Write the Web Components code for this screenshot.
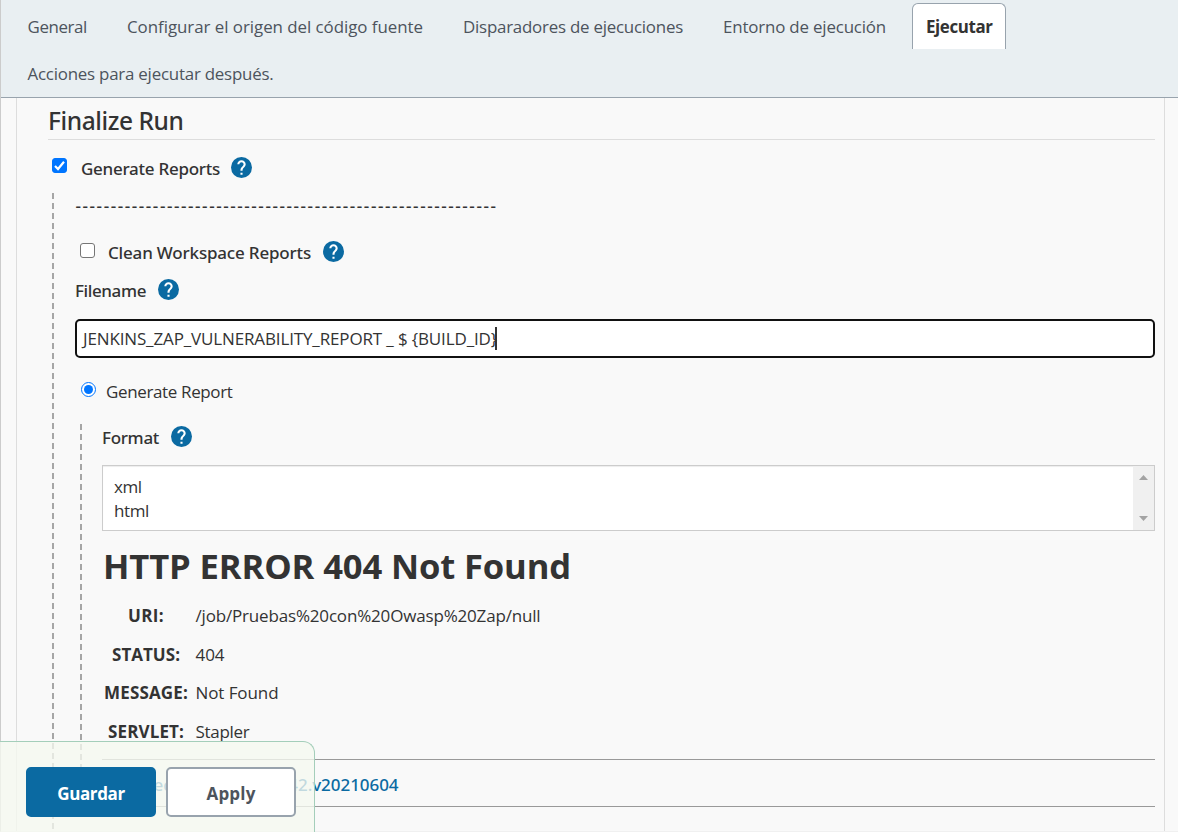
<!DOCTYPE html>
<html lang="es">
<head>
<meta charset="utf-8">
<title>Jenkins</title>
<style>
html,body{margin:0;height:100%;overflow:hidden;background:#f9f9f9}
body{font:17px/24px "Open Sans","Noto Sans",sans-serif;color:#333}
</style>
</head>
<body>
<job-config></job-config>
<script>
const define=(name,html,ready)=>customElements.define(name,class extends HTMLElement{
  connectedCallback(){
    if(this.shadowRoot)return;
    this.attachShadow({mode:'open'}).innerHTML=html;
    if(ready)ready.call(this,this.shadowRoot);
  }
});

/* A single line label tracked to the width given in its w attribute. */
define('ui-text',`<style>:host{display:inline-block;white-space:pre;flex:none}span{display:inline-block}</style><span><slot></slot></span>`,function(root){
  const s=root.querySelector('span'),w=+this.getAttribute('w');
  if(!w)return;
  const n=this.textContent.length;
  const natural=s.getBoundingClientRect().width;
  s.style.letterSpacing=((w-natural)/n).toFixed(4)+'px';
  this.style.width=w+'px';
});

define('help-icon',`<style>:host{display:block;width:21px;height:21px;flex:none}svg{display:block}</style>
<svg width="21" height="21" viewBox="2 2 20 20"><circle cx="12" cy="12" r="10" fill="#0b6aa2"/><path fill="#fff" d="M13 19h-2v-2h2v2zm2.07-7.75-.9.92C13.45 12.9 13 13.5 13 15h-2v-.5c0-1.1.45-2.1 1.17-2.83l1.24-1.26c.37-.36.59-.86.59-1.41 0-1.1-.9-2-2-2s-2 .9-2 2H8c0-2.21 1.79-4 4-4s4 1.79 4 4c0 .88-.36 1.68-.93 2.25z"/></svg>`);

define('check-mark',`<style>:host{display:block;box-sizing:border-box;width:15px;height:15px;border:1px solid #767676;border-radius:3px;background:#fff;flex:none}
:host([checked]){background:#0075ff;border-color:#0075ff}svg{display:none;margin:-1px}:host([checked]) svg{display:block}</style>
<svg width="15" height="15" viewBox="0 0 15 15"><path d="M3 8l3 3 6-7.2" fill="none" stroke="#fff" stroke-width="2.2"/></svg>`);

define('radio-mark',`<style>:host{display:grid;place-items:center;box-sizing:border-box;width:15px;height:15px;border:1.5px solid #0075ff;border-radius:50%;background:#fff;flex:none}i{width:9px;height:9px;border-radius:50%;background:#0075ff}</style><i></i>`);

define('config-tab',`<style>:host{display:block;box-sizing:border-box;height:47px;padding:12px 20px 0;color:#4d545d}
:host([active]){padding:11px 12px 0 13.5px;margin:0 0 0 5.5px;border:1px solid #98a3ad;border-bottom:0;border-radius:6px 6px 0 0;background:#fff;color:#333;font-weight:700;height:46px}</style><slot></slot>`);

define('config-tabs',`<style>:host{box-sizing:border-box;display:flex;flex-wrap:wrap;align-content:flex-start;height:98px;padding:3px 100px 0 6.5px;background:#e9eff2;border-bottom:1px solid #98a3ad;font-size:16.9px}</style>
<config-tab><ui-text w="59.5">General</ui-text></config-tab>
<config-tab><ui-text w="296">Configurar el origen del código fuente</ui-text></config-tab>
<config-tab><ui-text w="220">Disparadores de ejecuciones</ui-text></config-tab>
<config-tab><ui-text w="163">Entorno de ejecución</ui-text></config-tab>
<config-tab active><ui-text w="66.5">Ejecutar</ui-text></config-tab>
<config-tab><ui-text w="246">Acciones para ejecutar después.</ui-text></config-tab>`);

define('dashed-rail',`<style>:host{display:block;box-sizing:border-box;background:repeating-linear-gradient(#a6a6a6 0 6px,transparent 6px 10px) 0 0/2px 100% no-repeat}</style><slot></slot>`);

define('file-field',`<style>:host{display:flex;align-items:center;box-sizing:border-box;height:39px;border:2px solid #111;border-radius:5px;background:#fff;padding:1px 0 0 6px;font-size:17px}
i{width:2px;height:23px;background:#333;margin:-2px 0 0 -2px}</style><slot></slot><i></i>`);

define('format-list',`<style>:host{display:flex;box-sizing:border-box;height:66px;border:1px solid #ccc;background:#fff;box-shadow:inset 0 1px 1px rgba(0,0,0,.075)}
.o{flex:1;display:flex;flex-direction:column;padding:9px 0 0 11px}.s{width:21px;background:#f0f0f0;display:flex;flex-direction:column;justify-content:space-between;align-items:center;padding:9px 0}svg{display:block}</style>
<div class="o"><ui-text w="27.5">xml</ui-text><ui-text w="35">html</ui-text></div>
<div class="s"><svg width="9" height="5"><path d="M0 5 4.5 0 9 5z" fill="#a3a3a3"/></svg><svg width="9" height="5"><path d="M0 0 4.5 5 9 0z" fill="#a3a3a3"/></svg></div>`);

define('error-report',`<style>:host{display:block}
h1{margin:0;height:66px;padding:12px 0 0 1px;box-sizing:border-box;font-size:34.6px;line-height:46px;font-weight:700}
.t{display:grid;grid-template-columns:88px 1fr;grid-auto-rows:38.6px;column-gap:5.5px;line-height:38.6px}
.t>b{text-align:center;font-weight:700;font-size:17px}
.f{margin-top:8px;height:48px;box-sizing:border-box;border-top:1px solid #999;border-bottom:1px solid #999;padding:13px 0 0 1px;color:#0b6aa2;font-weight:500;font-family:"Noto Sans","Open Sans",sans-serif}</style>
<h1><ui-text w="468">HTTP ERROR 404 Not Found</ui-text></h1>
<div class="t">
<b><ui-text w="36">URI:</ui-text></b><ui-text w="345">/job/Pruebas%20con%20Owasp%20Zap/null</ui-text>
<b><ui-text w="68">STATUS:</ui-text></b><ui-text w="29">404</ui-text>
<b><ui-text w="84">MESSAGE:</ui-text></b><ui-text w="83">Not Found</ui-text>
<b><ui-text w="76">SERVLET:</ui-text></b><ui-text w="54">Stapler</ui-text>
</div><div class="f"><ui-text w="295.5">Powered by Jetty:// 9.4.42.v20210604</ui-text></div>`);

define('action-button',`<style>:host{display:grid;place-items:center;box-sizing:border-box;width:130px;height:50px;border:2px solid #98a3ad;border-radius:5px;background:#fff;color:#4d545d;font-weight:700;font-size:17px;padding-top:3px}
:host([primary]){background:#0b6aa2;border-color:#0b6aa2;color:#fff}</style><slot></slot>`);

define('action-bar',`<style>:host{position:absolute;left:-1px;bottom:-1px;z-index:2;box-sizing:border-box;width:315px;height:91px;display:flex;gap:10px;padding:25px 0 0 26px;background:rgba(245,249,240,.78);border:1px solid #a4ceba;border-left:0;border-bottom:0;border-radius:0 12px 0 0}</style>
<action-button primary><ui-text w="67.5">Guardar</ui-text></action-button><action-button><ui-text w="49">Apply</ui-text></action-button>`);

define('job-config',`<style>:host{display:block;position:relative;box-sizing:border-box;height:832px;border-left:1px solid #ccc;border-bottom:1px solid #f0f0f0}
main{box-sizing:border-box;height:733px;margin:0 13px 0 15px;border:solid #ddd;border-width:0 1px;padding:0 9px 0 31px}
h2{margin:0;height:42px;box-sizing:border-box;border-bottom:1px solid #ddd;padding:8px 0 0;font-size:24.5px;line-height:30px;font-weight:500;font-family:"Noto Sans","Open Sans",sans-serif}
.r{display:flex;font-weight:500;font-family:"Noto Sans","Open Sans",sans-serif}.r help-icon{margin-left:12px}
.a{height:53px;padding:18px 0 0 4px;box-sizing:border-box}.a check-mark{margin-right:14px}.a ui-text{margin-top:-1px}.a help-icon{margin:-1px 0 0 11px}
.outer{margin-left:4px;padding-left:23px;height:636px}
.d{height:44px;padding:1px 0 0 .5px;box-sizing:border-box}
.b{height:40px;padding:6px 0 0 5px;box-sizing:border-box}.b check-mark{margin-right:13px}.b ui-text{margin-top:-2px}.b help-icon{margin-top:-2px}
.c{height:42px;padding-top:2px;box-sizing:border-box}
.e{height:66px;padding:24px 0 0 6px;box-sizing:border-box;font-weight:400;font-family:"Open Sans",sans-serif}.e radio-mark{margin-right:10px}.e ui-text{margin-top:-2px}
.inner{margin-left:5px;padding-left:22px;height:383px}
.f{height:41px;padding-top:2px;box-sizing:border-box}
</style>
<config-tabs></config-tabs>
<main>
<h2><ui-text w="135.5">Finalize Run</ui-text></h2>
<div class="r a"><check-mark checked></check-mark><ui-text w="139">Generate Reports</ui-text><help-icon></help-icon></div>
<dashed-rail class="outer">
<div class="r d"><ui-text w="422">------------------------------------------------------------</ui-text></div>
<div class="r b"><check-mark></check-mark><ui-text w="203">Clean Workspace Reports</ui-text><help-icon></help-icon></div>
<div class="r c"><ui-text w="71">Filename</ui-text><help-icon></help-icon></div>
<file-field><ui-text w="414">JENKINS_ZAP_VULNERABILITY_REPORT _ $ {BUILD_ID}</ui-text></file-field>
<div class="r e"><radio-mark></radio-mark><ui-text w="126.5">Generate Report</ui-text></div>
<dashed-rail class="inner">
<div class="r f"><ui-text w="57">Format</ui-text><help-icon></help-icon></div>
<format-list></format-list>
<error-report></error-report>
</dashed-rail>
</dashed-rail>
</main>
<action-bar></action-bar>`);
</script>
</body>
</html>
